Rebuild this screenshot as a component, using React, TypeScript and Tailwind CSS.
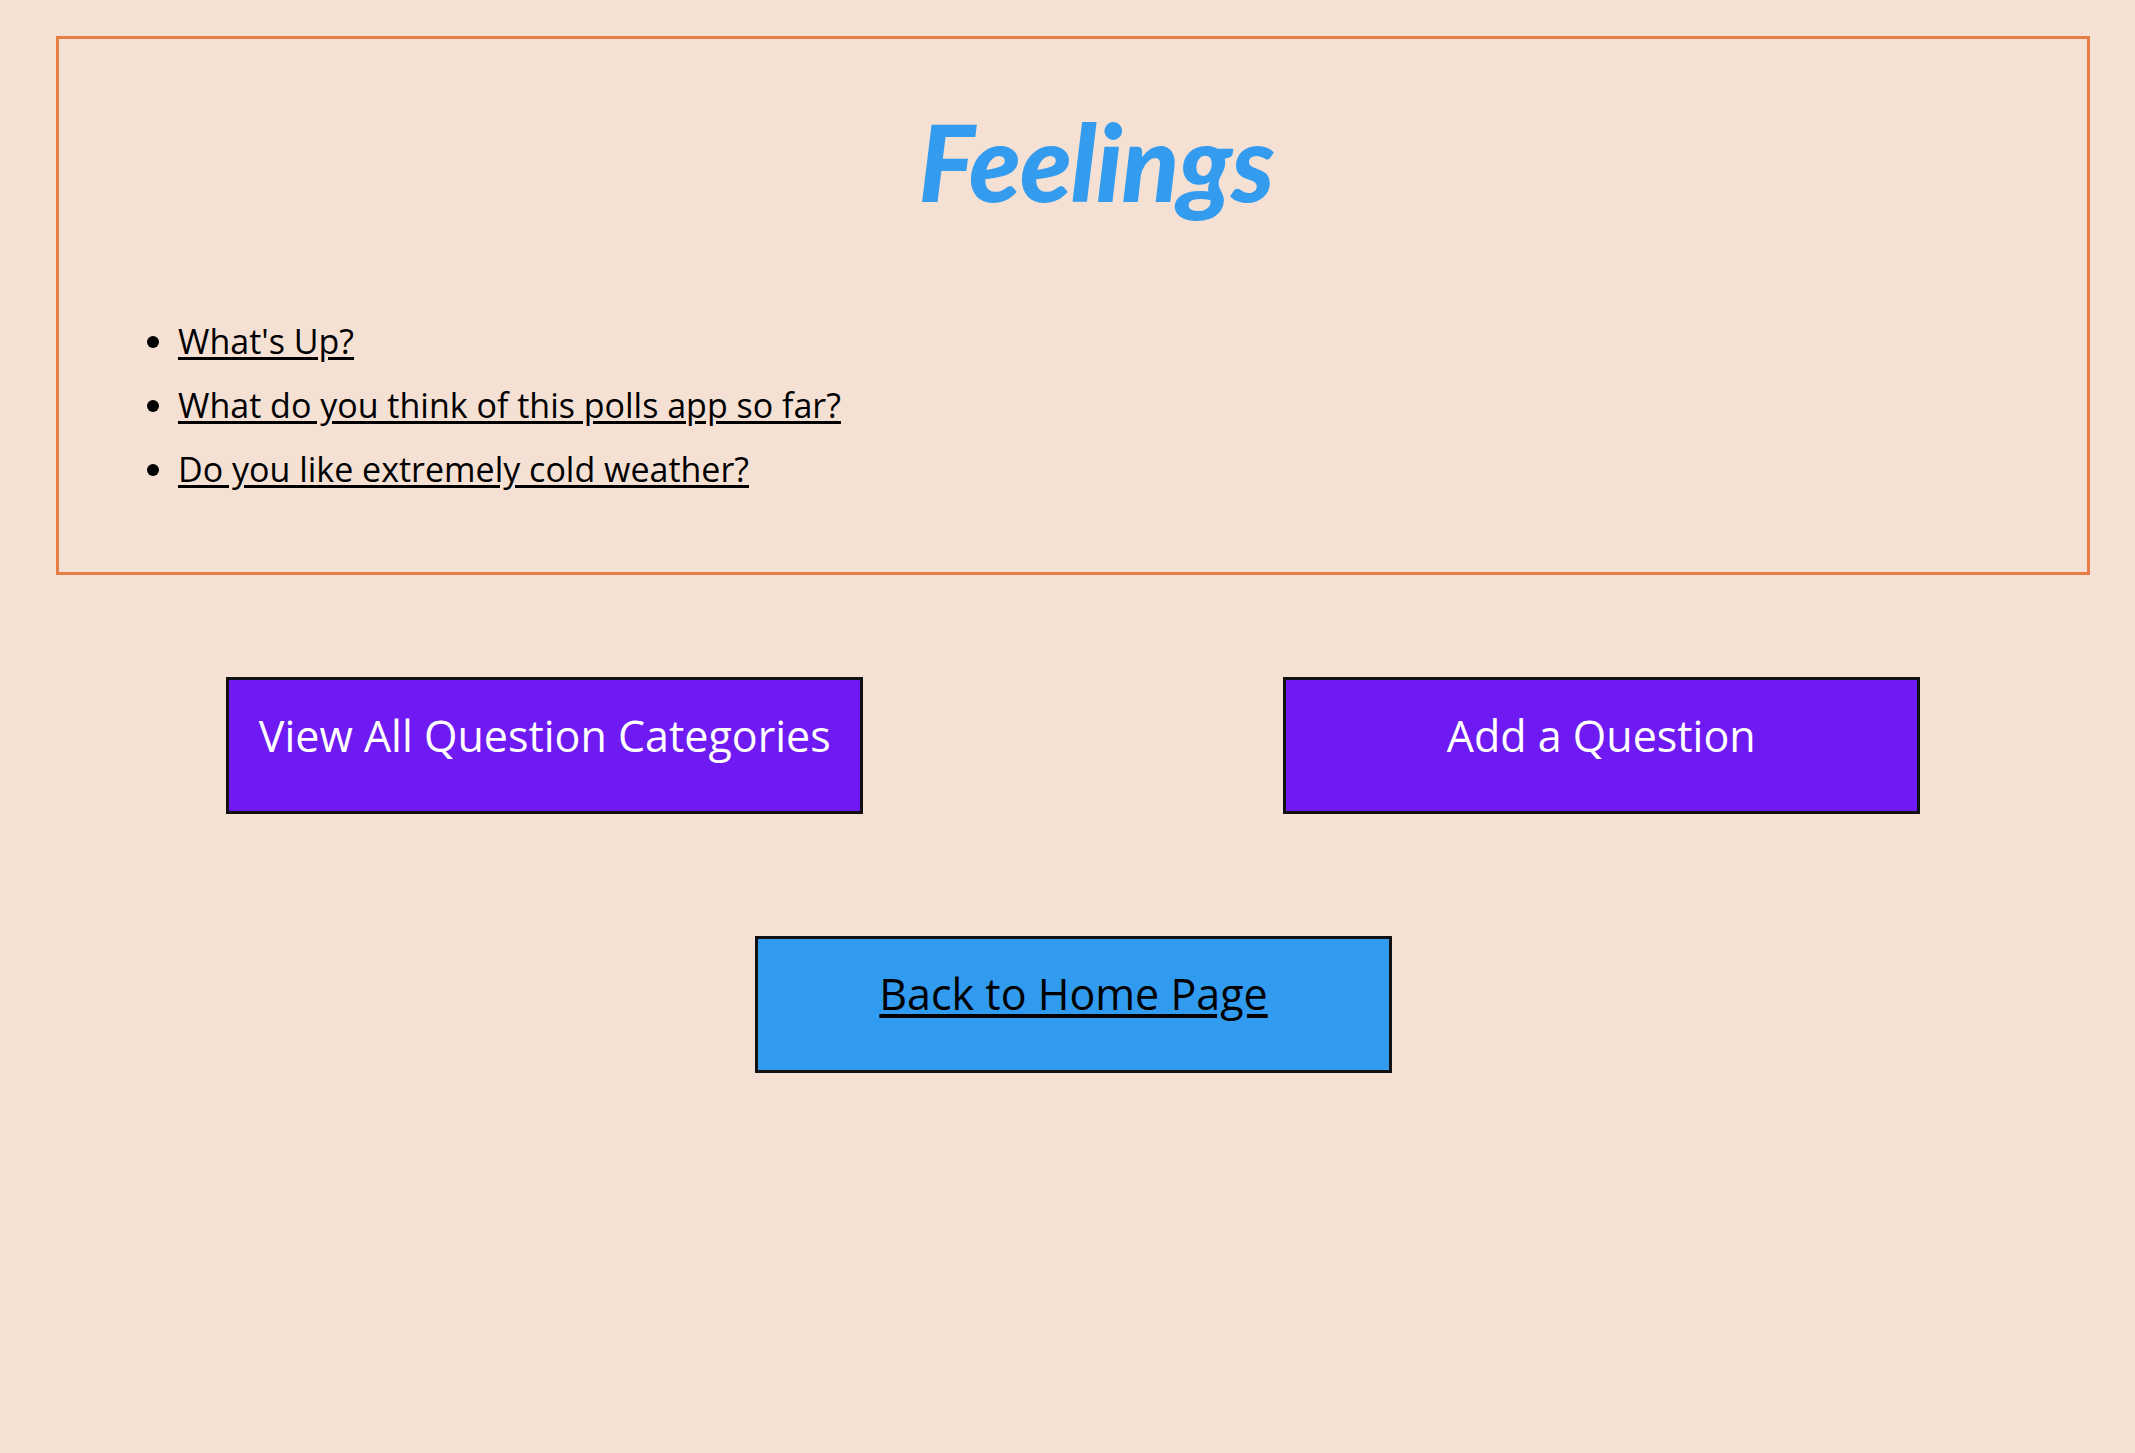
import React from 'react';

const questions = [
  "What's Up?",
  'What do you think of this polls app so far?',
  'Do you like extremely cold weather?',
];

export default function App() {
  return (
    <div className="min-h-screen bg-[#f5e0d4] font-['Open_Sans',sans-serif] text-black">
      {/* category card */}
      <div className="pt-[36px] pl-[56px] pr-[45px]">
        <section className="border-[3px] border-[#e67d45] pt-[58px] pb-[71px]">
          <h1 className="text-center pl-[46px] font-['Lato',sans-serif] text-[106px] leading-[128px] tracking-[-1px] font-black italic text-[#339cef]">
            Feelings
          </h1>
          <ul className="list-disc mt-[84px] pl-[119px] text-[34px] leading-[64px]">
            {questions.map((q) => (
              <li key={q}>
                <a href="#" className="underline underline-offset-[3px]">
                  {q}
                </a>
              </li>
            ))}
          </ul>
        </section>
      </div>

      {/* actions */}
      <div className="grid grid-cols-2 mt-[102px]">
        <div className="flex justify-center pl-[22px]">
          <button className="w-[637px] h-[137px] border-[3px] border-[#111] bg-[#6f19f3] text-white text-[43px] leading-[52px] pt-[30px] flex justify-center items-start">
            View All Question Categories
          </button>
        </div>
        <div className="flex justify-center">
          <button className="w-[637px] h-[137px] border-[3px] border-[#111] bg-[#6f19f3] text-white text-[43px] leading-[52px] pt-[30px] flex justify-center items-start">
            Add a Question
          </button>
        </div>
      </div>

      <div className="flex justify-center mt-[122px]">
        <a
          href="#"
          className="w-[637px] h-[137px] border-[3px] border-[#111] bg-[#319bef] text-[43px] leading-[52px] pt-[29px] flex justify-center items-start ml-[12px]"
        >
          <span className="underline underline-offset-[4px]">Back to Home Page</span>
        </a>
      </div>
    </div>
  );
}
